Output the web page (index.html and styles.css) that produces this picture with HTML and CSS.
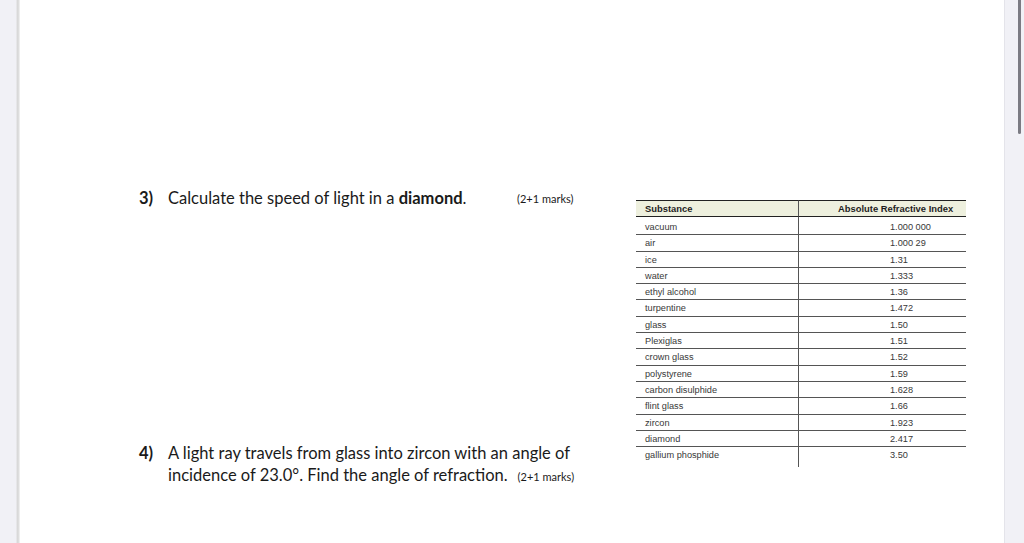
FILE: index.html
```html
<!DOCTYPE html>
<html>
<head>
<meta charset="utf-8">
<link rel="stylesheet" href="styles.css">
</head>
<body>
<div class="gutter-left"></div>
<main class="page">
  <div class="content">
    <div class="questions">
      <div class="q q3">
        <span class="num">3)</span>
        <span class="text">Calculate the speed of light in a <b>diamond</b>.</span>
        <span class="marks">(2+1 marks)</span>
      </div>
      <div class="q q4">
        <span class="num">4)</span>
        <div class="lines">
          <div class="line">A light ray travels from glass into zircon with an angle of</div>
          <div class="line"><span>incidence of 23.0°. Find the angle of refraction.</span><span class="marks inline">(2+1 marks)</span></div>
        </div>
      </div>
    </div>
    <div class="table">
      <div class="cell head left">Substance</div>
      <div class="cell head right">Absolute Refractive Index</div>
      <div class="cell left first">vacuum</div><div class="cell right first">1.000 000</div>
      <div class="cell left">air</div><div class="cell right">1.000 29</div>
      <div class="cell left">ice</div><div class="cell right">1.31</div>
      <div class="cell left">water</div><div class="cell right">1.333</div>
      <div class="cell left">ethyl alcohol</div><div class="cell right">1.36</div>
      <div class="cell left">turpentine</div><div class="cell right">1.472</div>
      <div class="cell left">glass</div><div class="cell right">1.50</div>
      <div class="cell left">Plexiglas</div><div class="cell right">1.51</div>
      <div class="cell left">crown glass</div><div class="cell right">1.52</div>
      <div class="cell left">polystyrene</div><div class="cell right">1.59</div>
      <div class="cell left">carbon disulphide</div><div class="cell right">1.628</div>
      <div class="cell left">flint glass</div><div class="cell right">1.66</div>
      <div class="cell left">zircon</div><div class="cell right">1.923</div>
      <div class="cell left">diamond</div><div class="cell right">2.417</div>
      <div class="cell left last">gallium phosphide</div><div class="cell right last">3.50</div>
    </div>
  </div>
</main>
<div class="gutter-right"><div class="thumb"></div></div>
</body>
</html>
```

FILE: styles.css
```css
html, body {
  margin: 0;
  padding: 0;
}
body {
  width: 1024px;
  height: 543px;
  overflow: hidden;
  display: flex;
  background: #f1f1f6;
}
.gutter-left {
  width: 20px;
  flex: none;
  background: linear-gradient(to right, #f1f1f6 0, #f1f1f6 16px, #dcdcdc 17px, #d6d6d6 18px, #e6e6e6 19px, #f6f6f6 20px);
}
.page {
  width: 984px;
  flex: none;
  background: #fff;
}
.gutter-right {
  width: 20px;
  flex: none;
  border-left: 1px solid #e4e4ea;
  box-sizing: border-box;
  padding-left: 13px;
}
.thumb {
  width: 3px;
  height: 134px;
  background: #7b7b83;
  border-radius: 0 0 2px 2px;
}
.content {
  display: flex;
  align-items: flex-start;
  padding: 187px 0 0 119px;
}
.questions {
  width: 497px;
  flex: none;
  font-family: Lato, "Open Sans", sans-serif;
  font-size: 16.5px;
  color: #1a1a1a;
}
.q {
  display: flex;
  line-height: 22px;
}
.num {
  width: 29px;
  flex: none;
  font-weight: bold;
}
.q3 .text {
  width: 349px;
  flex: none;
}
.marks {
  font-size: 11px;
  padding-top: 1px;
}
.q4 {
  margin-top: 232px;
}
.line {
  white-space: nowrap;
}
.marks.inline {
  display: inline-block;
  line-height: 12px;
  padding-top: 0;
  margin-left: 10px;
}
.table {
  margin-top: 13px;
  width: 330px;
  display: grid;
  grid-template-columns: 163px 167px;
  font-family: "Liberation Sans", Arial, sans-serif;
  font-size: 9.2px;
  color: #383838;
}
.cell {
  box-sizing: border-box;
  height: 16.3px;
  line-height: 16px;
  border-bottom: 1px solid #555;
  white-space: nowrap;
}
.cell.left {
  padding-left: 9px;
  border-right: 1px solid #555;
}
.cell.right {
  padding-left: 91px;
}
.cell.head {
  height: 17px;
  line-height: 15px;
  background: #eef0de;
  border-top: 1px solid #222;
  border-bottom: 1px solid #222;
  font-weight: bold;
  font-size: 9.4px;
  color: #1e1e1e;
}
.cell.head.right {
  padding-left: 39px;
}
.cell.first {
  height: 18.3px;
  padding-top: 2px;
}
.cell.last {
  height: 20px;
  border-bottom: none;
}
```
